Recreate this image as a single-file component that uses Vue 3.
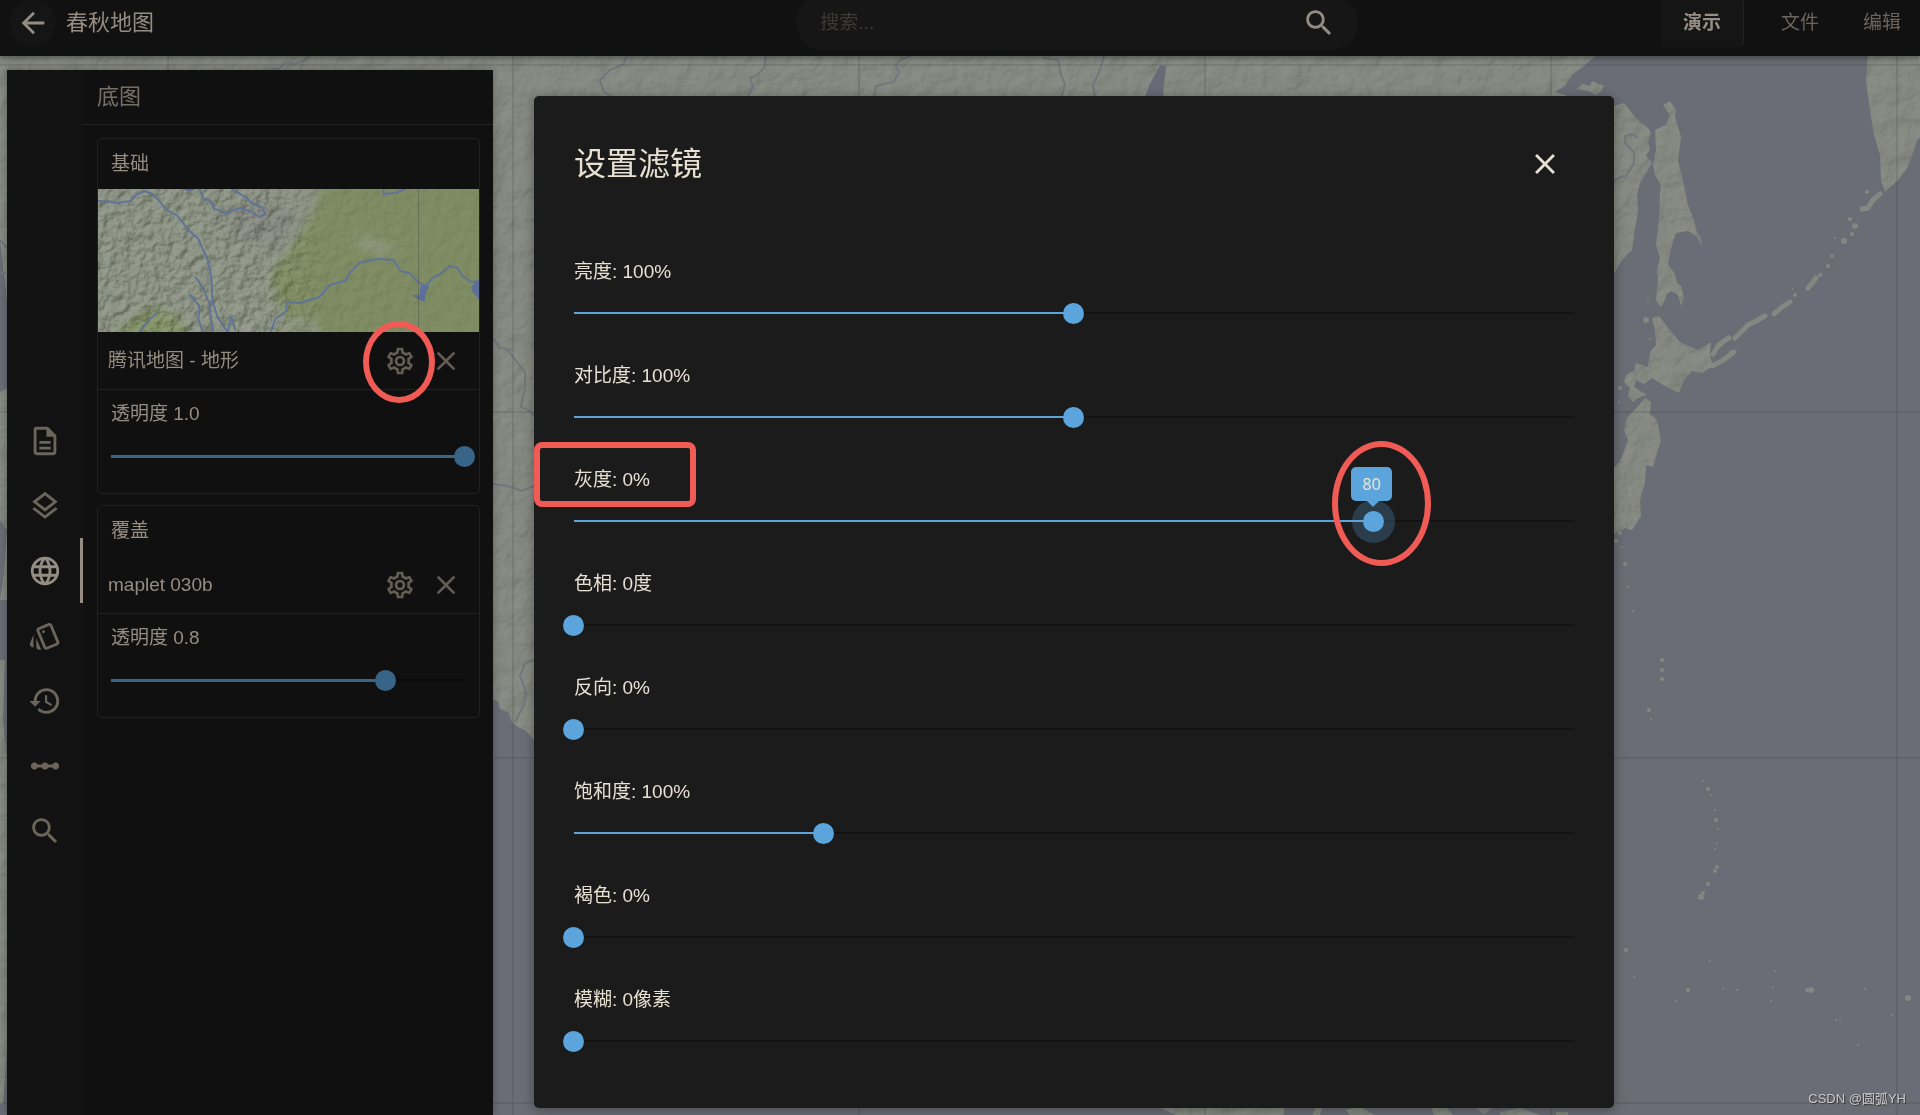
<template>
  <div class="page">
    <!-- 背景地图 -->
    <svg class="map" viewBox="0 0 1920 1115" preserveAspectRatio="xMidYMid slice" aria-hidden="true">
      <defs>
        <filter id="relief" x="0" y="0" width="100%" height="100%" color-interpolation-filters="sRGB">
          <feTurbulence type="fractalNoise" baseFrequency="0.05" numOctaves="4" seed="8" result="noise" />
          <feDiffuseLighting in="noise" surfaceScale="3" lighting-color="#9c9c9c">
            <feDistantLight azimuth="225" elevation="55" />
          </feDiffuseLighting>
        </filter>
        <clipPath id="landClip">
          <path v-for="(d, i) in lands" :key="i" :d="d" />
        </clipPath>
      </defs>
      <rect width="1920" height="1115" fill="#6a6d75" />
      <g fill="#868981">
        <path v-for="(d, i) in lands" :key="i" :d="d" />
      </g>
      <g class="chains">
        <path v-for="(d, i) in chains" :key="i" :d="d" />
      </g>
      <g clip-path="url(#landClip)" class="relief">
        <rect width="1920" height="1115" filter="url(#relief)" />
      </g>
      <circle v-for="(p, i) in islets" :key="i" :cx="p[0]" :cy="p[1]" :r="p[2]" fill="#848880" />
      <path d="M1160 65L1166 66L1163 96H1145L1150 84Z" fill="#686b76" />
      <g class="rivers">
        <path v-for="(d, i) in rivers" :key="i" :d="d" />
      </g>
      <path
        class="grid"
        d="M168 0V1115M513 0V1115M859 0V1115M1205 0V1115M1551 0V1115M1897 0V1115M0 65H1920M0 412H1920M0 758H1920M0 1103H1920"
      />
    </svg>

    <!-- 顶栏 -->
    <header class="topbar">
      <div class="brand">
        <button type="button" class="back" aria-label="返回">
          <svg class="icon-lg" viewBox="0 0 24 24"><path :d="icons.back" /></svg>
        </button>
        <span class="brand-name">春秋地图</span>
      </div>
      <form class="search" @submit.prevent>
        <input v-model="keyword" type="text" placeholder="搜索..." aria-label="搜索" />
        <button type="submit" aria-label="搜索">
          <svg class="icon-lg" viewBox="0 0 24 24"><path :d="icons.search" /></svg>
        </button>
      </form>
      <nav class="menu">
        <button
          v-for="item in menus"
          :key="item"
          type="button"
          :class="{ active: item === activeMenu }"
          @click="activeMenu = item"
        >
          {{ item }}
        </button>
      </nav>
    </header>

    <div class="workspace">
      <!-- 侧栏 -->
      <aside class="sidebar">
        <nav class="rail">
          <button
            v-for="tab in tabs"
            :key="tab.name"
            type="button"
            :aria-label="tab.label"
            :class="{ active: tab.name === activeTab }"
            @click="activeTab = tab.name"
          >
            <svg class="icon-lg" viewBox="0 0 24 24"><path :d="icons[tab.name]" /></svg>
          </button>
        </nav>
        <div class="panel">
          <h2>底图</h2>
          <div class="cards">
            <section v-for="layer in layers" :key="layer.id" class="card">
              <h3>{{ layer.group }}</h3>
              <svg
                v-if="layer.preview"
                class="preview"
                viewBox="0 0 382 143"
                preserveAspectRatio="xMidYMid slice"
                aria-hidden="true"
              >
                <defs>
                  <filter id="previewRelief" x="0" y="0" width="100%" height="100%" color-interpolation-filters="sRGB">
                    <feTurbulence type="fractalNoise" baseFrequency="0.1" numOctaves="4" seed="3" />
                    <feDiffuseLighting surfaceScale="4" lighting-color="#a6a6a6">
                      <feDistantLight azimuth="225" elevation="50" />
                    </feDiffuseLighting>
                  </filter>
                  <filter id="soft"><feGaussianBlur stdDeviation="4" /></filter>
                  <linearGradient id="ruggedFade">
                    <stop offset="0" stop-color="#ccc" />
                    <stop offset="0.45" stop-color="#ccc" />
                    <stop offset="0.6" stop-color="#333" />
                    <stop offset="1" stop-color="#222" />
                  </linearGradient>
                  <mask id="rugged"><rect width="382" height="143" fill="url(#ruggedFade)" /></mask>
                </defs>
                <rect width="382" height="143" fill="#8c9384" />
                <g filter="url(#soft)">
                  <path d="M225 -10L215 25L196 55L172 88L180 112L196 150H400V-10Z" fill="#7f8c64" />
                  <path d="M10 150L35 128L62 118L85 132L95 150Z" fill="#829068" />
                  <path d="M110 15L180 10L200 35L180 60L140 50Z" fill="#868a80" />
                  <path d="M255 48L275 50L300 60L285 66L262 58Z" fill="#8e967d" />
                  <path d="M185 128L215 130L230 150H180Z" fill="#8b937d" />
                </g>
                <g mask="url(#rugged)" class="relief strong">
                  <rect width="382" height="143" filter="url(#previewRelief)" />
                </g>
                <g class="preview-rivers">
                  <path d="M0 12L14 13L20 14L33 12L40 5L47 2L55 5L61 11L68 20L80 27L92 42L101 50L105 60L109 67L112 78L114 92L115 112L120 128L130 143" />
                  <path d="M102 0L106 10L113 12L117 20L130 24L142 19L152 22L162 28L168 25L164 18L154 14L148 8L134 0" />
                  <path d="M98 88L106 100L112 115L113 128L116 143M92 105L102 117L101 130L105 143M42 143L52 130L60 124M130 143L134 128L138 141" />
                  <path d="M173 143L178 130L189 122L189 113L203 114L215 110L222 108L232 96L248 92L252 84L262 74L280 70L296 71L303 82L312 84L322 94L329 97L335 89L343 85L352 77L360 79L365 87L374 93L382 92" />
                  <path d="M286 0V5L298 4L308 0" />
                </g>
                <path d="M314 106L322 106L323 97L332 97L328 105L327 113L320 110ZM374 98L378 92H382V111L375 103ZM85 0H98L92 3Z" fill="#5b6f99" />
                <path d="M321 0V143" class="grid" />
              </svg>
              <div class="layer-row">
                <span class="layer-name">{{ layer.name }}</span>
                <button type="button" aria-label="设置" class="tool">
                  <svg class="icon" viewBox="0 0 24 24"><path :d="icons.settings" /></svg>
                  <span v-if="layer.marked" class="mark mark-gear"></span>
                </button>
                <button type="button" aria-label="移除" class="tool">
                  <svg class="icon" viewBox="0 0 24 24"><path :d="icons.close" /></svg>
                </button>
              </div>
              <div class="opacity">
                <label :for="layer.id">透明度 {{ layer.opacity.toFixed(1) }}</label>
                <div class="slider thick">
                  <input
                    :id="layer.id"
                    v-model.number="layer.opacity"
                    type="range"
                    min="0.1"
                    max="1"
                    step="0.1"
                    :style="{ '--ratio': (layer.opacity - 0.1) / 0.9 }"
                  />
                </div>
              </div>
            </section>
          </div>
        </div>
      </aside>

      <!-- 滤镜对话框 -->
      <section class="dialog" role="dialog" aria-labelledby="dialog-title">
        <div class="dialog-head">
          <h1 id="dialog-title">设置滤镜</h1>
          <button type="button" aria-label="关闭">
            <svg class="icon-lg" viewBox="0 0 24 24"><path :d="icons.close" /></svg>
          </button>
        </div>
        <div class="filters">
          <div v-for="f in filters" :key="f.id" class="filter">
            <label :for="f.id">
              {{ f.label }}: {{ f.text }}
              <span v-if="f.dragging" class="mark mark-label"></span>
            </label>
            <div class="slider">
              <input
                :id="f.id"
                v-model.number="f.value"
                type="range"
                min="0"
                :max="f.max"
                :class="{ dragging: f.dragging }"
                :style="{ '--ratio': f.value / f.max }"
              />
              <div v-if="f.dragging" class="pin" :style="{ left: `${(f.value / f.max) * 100}%` }">
                <span class="bubble">{{ f.value }}</span>
                <span class="mark mark-pin"></span>
              </div>
            </div>
          </div>
        </div>
      </section>
    </div>

    <span class="watermark">CSDN @圆弧YH</span>
  </div>
</template>

<script setup>
import { ref, reactive } from 'vue'

const keyword = ref('')
const menus = ['演示', '文件', '编辑']
const activeMenu = ref('演示')
const activeTab = ref('globe')

const tabs = [
  { name: 'doc', label: '文档' },
  { name: 'layers', label: '图层' },
  { name: 'globe', label: '底图' },
  { name: 'style', label: '样式' },
  { name: 'history', label: '历史' },
  { name: 'scale', label: '时间轴' },
  { name: 'search', label: '搜索' },
]

const layers = reactive([
  { id: 'base', group: '基础', name: '腾讯地图 - 地形', opacity: 1, preview: true, marked: true },
  { id: 'overlay', group: '覆盖', name: 'maplet 030b', opacity: 0.8 },
])

const filters = reactive([
  { id: 'brightness', label: '亮度', text: '100%', value: 100, max: 200 },
  { id: 'contrast', label: '对比度', text: '100%', value: 100, max: 200 },
  { id: 'grayscale', label: '灰度', text: '0%', value: 80, max: 100, dragging: true },
  { id: 'hue', label: '色相', text: '0度', value: 0, max: 360 },
  { id: 'invert', label: '反向', text: '0%', value: 0, max: 100 },
  { id: 'saturate', label: '饱和度', text: '100%', value: 100, max: 400 },
  { id: 'sepia', label: '褐色', text: '0%', value: 0, max: 100 },
  { id: 'blur', label: '模糊', text: '0像素', value: 0, max: 20 },
])

// 陆地轮廓
const lands = [
  'M0 0H1640L1595 56L1584 66L1572 75L1565 86L1555 92L1562 94L1580 100L1614 106L1624 103L1632 113L1638 120L1648 128L1651 133L1648 142L1650 150L1646 155L1652 163L1646 173L1640 183L1637 195L1638 212L1634 235L1632 250L1622 260L1616 270L1610 280L1500 420L1300 700L900 800L560 752L534 740L526 731L518 727L512 722L508 712L500 709L498 701L493 700L300 640L7 640V600L0 600L4 570L7 530L0 520V392L7 388V300L0 240Z',
  'M1577 89L1582 84L1590 86L1592 81L1604 86L1601 91L1596 95L1588 91Z',
  'M1663 105L1670 101L1676 110L1675 117L1681 137L1678 160L1684 185L1688 205L1694 220L1696 230L1701 238L1702 246L1696 236L1688 231L1676 233L1671 248L1668 264L1675 274L1677 283L1681 286L1684 297L1681 306L1678 295L1671 291L1667 294L1663 304L1660 307L1656 300L1658 280L1657 270L1660 258L1656 245L1659 220L1660 192L1661 186L1655 175L1653 165L1656 150L1655 130L1666 125L1670 115Z',
  'M1652 318L1659 316L1668 328L1680 342L1698 350L1711 342L1710 352L1711 360L1714 365L1702 373L1692 371L1684 380L1679 393L1665 386L1652 378L1644 384L1636 380L1634 387L1647 395L1638 398L1633 402L1628 396L1630 388L1624 382L1626 375L1634 371L1636 363L1648 367L1650 352L1656 345L1655 330Z',
  'M1640 404L1645 398L1651 402L1650 414L1657 420L1661 440L1657 453L1653 467L1646 465L1645 483L1640 500L1641 516L1632 530L1625 528L1600 540V480L1620 462L1628 440L1624 430L1627 418Z',
  'M1868 50L1866 82L1870 110L1874 135L1880 155L1881 180L1885 192L1898 180L1907 168L1914 150L1917 140L1926 132V50Z',
  'M1155 1106H1284V1115H1176L1165 1110ZM1316 1104H1323L1320 1115H1313ZM1346 1110L1360 1106L1374 1115H1350ZM1430 1104H1444L1453 1115H1434ZM1472 1106H1494L1484 1114ZM1500 1112L1520 1108L1540 1115H1500ZM1556 1112H1568V1115H1556ZM0 660H5L3 720L7 760V1050L3 1104H0Z',
]

// 岛链
const chains = [
  'M1713 354L1718 346L1724 341L1729 338',
  'M1712 366L1722 361L1734 352',
  'M1735 338L1748 325L1756 321L1765 316',
  'M1774 314L1782 307L1790 302',
  'M1808 288L1813 282L1816 278',
  'M1862 209L1868 208L1873 200L1880 194',
]

// x, y, 半径
const islets = [
  [1867, 192, 2], [1850, 219, 2], [1855, 226, 3], [1852, 234, 2], [1844, 241, 3], [1835, 238, 1], [1832, 256, 2],
  [1828, 266, 2], [1820, 275, 2], [1795, 295, 2], [1793, 289, 1], [1732, 353, 3], [1646, 320, 3], [1648, 301, 1],
  [1650, 339, 1], [1620, 388, 2], [1619, 402, 1], [1620, 533, 2], [1616, 541, 2], [1622, 547, 1],
  [1625, 564, 2], [1628, 587, 1], [1633, 611, 1], [1662, 660, 2], [1662, 670, 2], [1662, 679, 2], [1649, 710, 2],
  [1651, 719, 1], [1703, 781, 1], [1708, 789, 2], [1711, 795, 1], [1715, 810, 1], [1716, 820, 2], [1718, 829, 1],
  [1717, 843, 1], [1715, 849, 1], [1717, 867, 2], [1715, 871, 2], [1708, 884, 2], [1703, 893, 2], [1701, 897, 3],
  [1626, 950, 2], [1634, 977, 1], [1688, 990, 2], [1676, 1001, 1], [1710, 961, 1], [1723, 989, 1], [1737, 990, 1],
  [1775, 971, 1], [1773, 987, 1], [1771, 1001, 1], [1807, 990, 2], [1811, 990, 3], [1865, 989, 1], [1908, 998, 3],
  [1892, 1015, 1], [1836, 1020, 1], [1840, 1019, 1], [1858, 1045, 1],
]

const rivers = [
  'M310 56L305 60L295 64L286 62L280 68L270 70',
  'M626 56L624 64L610 70L600 80L604 92L611 96',
  'M766 56L764 68L757 75L750 78L753 88L748 96',
  'M910 56L900 60L896 66L899 72L894 82L876 86L874 96',
  'M1042 58L1058 60L1061 75L1065 84L1062 96',
  'M1104 56L1100 70L1093 85L1095 96',
  'M493 338L500 348L507 349L513 357L520 366L525 372L525 388L521 407L530 411L534 416',
  'M493 484L502 485L514 488L521 491L534 486',
  'M534 660L525 663L520 676L526 692L524 705L515 722',
  'M1614 181L1620 177L1626 176L1634 163L1634 152L1625 143L1625 136L1632 134L1638 138',
  'M0 240L7 248M0 273H6',
]

const icons = {
  back: 'M20 11H7.83l5.59-5.59L12 4l-8 8 8 8 1.41-1.41L7.83 13H20v-2z',
  close: 'M19 6.41L17.59 5 12 10.59 6.41 5 5 6.41 10.59 12 5 17.59 6.41 19 12 13.41 17.59 19 19 17.59 13.41 12z',
  doc: 'M8 16h8v2H8zm0-4h8v2H8zm6-10H6c-1.1 0-2 .9-2 2v16c0 1.1.89 2 1.99 2H18c1.1 0 2-.9 2-2V8l-6-6zm4 18H6V4h7v5h5v11z',
  layers: 'M11.99 18.54l-7.37-5.73L3 14.07l9 7 9-7-1.63-1.27-7.38 5.74zM12 16l7.36-5.73L21 9l-9-7-9 7 1.63 1.27L12 16zm0-11.47L17.74 9 12 13.47 6.26 9 12 4.53z',
  globe: 'M11.99 2C6.47 2 2 6.48 2 12s4.47 10 9.99 10C17.52 22 22 17.52 22 12S17.52 2 11.99 2zm6.93 6h-2.95c-.32-1.25-.78-2.45-1.38-3.56 1.84.63 3.37 1.91 4.33 3.56zM12 4.04c.83 1.2 1.48 2.53 1.91 3.96h-3.82c.43-1.43 1.08-2.76 1.91-3.96zM4.26 14C4.1 13.36 4 12.69 4 12s.1-1.36.26-2h3.38c-.08.66-.14 1.32-.14 2s.06 1.34.14 2H4.26zm.82 2h2.95c.32 1.25.78 2.45 1.38 3.56-1.84-.63-3.37-1.9-4.33-3.56zm2.95-8H5.08c.96-1.66 2.49-2.93 4.33-3.56C8.81 5.55 8.35 6.75 8.03 8zM12 19.96c-.83-1.2-1.48-2.53-1.91-3.96h3.82c-.43 1.43-1.08 2.76-1.91 3.96zM14.34 14H9.66c-.09-.66-.16-1.32-.16-2s.07-1.35.16-2h4.68c.09.65.16 1.32.16 2s-.07 1.34-.16 2zm.25 5.56c.6-1.11 1.06-2.31 1.38-3.56h2.95c-.96 1.65-2.49 2.93-4.33 3.56zM16.36 14c.08-.66.14-1.32.14-2s-.06-1.34-.14-2h3.38c.16.64.26 1.31.26 2s-.1 1.36-.26 2h-3.38z',
  style: 'M2.53 19.65l1.34.56v-9.03l-2.43 5.86c-.41 1.02.08 2.19 1.09 2.61zm19.5-3.7L17.07 3.98c-.31-.75-1.04-1.21-1.81-1.23-.26 0-.53.04-.79.15L7.1 5.95c-.75.31-1.21 1.03-1.23 1.8-.01.27.04.54.15.8l4.96 11.97c.31.76 1.05 1.22 1.83 1.23.26 0 .52-.05.77-.15l7.36-3.05c1.02-.42 1.51-1.59 1.09-2.6zm-9.2 3.8L7.87 7.79l7.35-3.04h.01l4.95 11.95-7.35 3.05zM11 8a1 1 0 1 0 0 2 1 1 0 0 0 0-2zM5.88 19.75c0 1.1.9 2 2 2h1.45l-3.45-8.34v6.34z',
  history: 'M13.5 8H12v5l4.28 2.54.72-1.21-3.5-2.08V8zM13 3a9 9 0 0 0-9 9H1l3.96 4.03L9 12H6a7 7 0 1 1 7 7c-1.93 0-3.68-.79-4.94-2.06l-1.42 1.42A8.9 8.9 0 0 0 13 21a9 9 0 0 0 0-18z',
  scale: 'M19.5 9.5c-1.03 0-1.9.62-2.29 1.5h-2.92c-.39-.88-1.26-1.5-2.29-1.5s-1.9.62-2.29 1.5H6.79c-.39-.88-1.26-1.5-2.29-1.5C3.12 9.5 2 10.62 2 12s1.12 2.5 2.5 2.5c1.03 0 1.9-.62 2.29-1.5h2.92c.39.88 1.26 1.5 2.29 1.5s1.9-.62 2.29-1.5h2.92c.39.88 1.26 1.5 2.29 1.5 1.38 0 2.5-1.12 2.5-2.5s-1.12-2.5-2.5-2.5z',
  search: 'M15.5 14h-.79l-.28-.27C15.41 12.59 16 11.11 16 9.5 16 5.91 13.09 3 9.5 3S3 5.91 3 9.5 5.91 16 9.5 16c1.61 0 3.09-.59 4.23-1.57l.27.28v.79l5 4.99L20.49 19l-4.99-5zm-6 0C7.01 14 5 11.99 5 9.5S7.01 5 9.5 5 14 7.01 14 9.5 11.99 14 9.5 14z',
  settings: 'M19.43 12.98c.04-.32.07-.64.07-.98 0-.34-.03-.66-.07-.98l2.11-1.65c.19-.15.24-.42.12-.64l-2-3.46c-.09-.16-.26-.25-.44-.25-.06 0-.12.01-.17.03l-2.49 1c-.52-.4-1.08-.73-1.69-.98l-.38-2.65C14.46 2.18 14.25 2 14 2h-4c-.25 0-.46.18-.49.42l-.38 2.65c-.61.25-1.17.59-1.69.98l-2.49-1c-.06-.02-.12-.03-.18-.03-.17 0-.34.09-.43.25l-2 3.46c-.13.22-.07.49.12.64l2.11 1.65c-.04.32-.07.65-.07.98 0 .33.03.66.07.98l-2.11 1.65c-.19.15-.24.42-.12.64l2 3.46c.09.16.26.25.44.25.06 0 .12-.01.17-.03l2.49-1c.52.4 1.08.73 1.69.98l.38 2.65c.03.24.24.42.49.42h4c.25 0 .46-.18.49-.42l.38-2.65c.61-.25 1.17-.59 1.69-.98l2.49 1c.06.02.12.03.18.03.17 0 .34-.09.43-.25l2-3.46c.12-.22.07-.49-.12-.64l-2.11-1.65zm-1.98-1.71c.04.31.05.52.05.73 0 .21-.02.43-.05.73l-.14 1.13.89.7 1.08.84-.7 1.21-1.27-.51-1.04-.42-.9.68c-.43.32-.84.56-1.25.73l-1.06.43-.16 1.13-.2 1.35h-1.4l-.19-1.35-.16-1.13-1.06-.43c-.43-.18-.83-.41-1.23-.71l-.91-.7-1.06.43-1.27.51-.7-1.21 1.08-.84.89-.7-.14-1.13c-.03-.31-.05-.54-.05-.74s.02-.43.05-.73l.14-1.13-.89-.7-1.08-.84.7-1.21 1.27.51 1.04.42.9-.68c.43-.32.84-.56 1.25-.73l1.06-.43.16-1.13.2-1.35h1.39l.19 1.35.16 1.13 1.06.43c.43.18.83.41 1.23.71l.91.7 1.06-.43 1.27-.51.7 1.21-1.07.85-.89.7.14 1.13zM12 8c-2.21 0-4 1.79-4 4s1.79 4 4 4 4-1.79 4-4-1.79-4-4-4zm0 6c-1.1 0-2-.9-2-2s.9-2 2-2 2 .9 2 2-.9 2-2 2z',
}
</script>

<style>
body {
  margin: 0;
  background: #6a6d75;
}
</style>

<style scoped>
.page {
  position: relative;
  display: flex;
  flex-direction: column;
  min-height: 100vh;
  overflow: hidden;
  font-family: "Liberation Sans", "Noto Sans CJK SC", sans-serif;
  font-size: 19px;
  line-height: 28px;
  color: #958d82;
}

button {
  display: flex;
  align-items: center;
  justify-content: center;
  padding: 0;
  border: 0;
  background: none;
  color: inherit;
  font: inherit;
  cursor: pointer;
}

h1,
h2,
h3 {
  margin: 0;
  font-weight: 400;
}

svg {
  display: block;
  fill: currentColor;
}

.icon {
  width: 32px;
  height: 32px;
}

.icon-lg {
  width: 34px;
  height: 34px;
}

/* 地图 */
.map {
  position: absolute;
  inset: 0;
  width: 100%;
  height: 100%;
}

.relief {
  mix-blend-mode: soft-light;
  opacity: 0.5;
}

.relief.strong {
  opacity: 0.9;
}

.chains {
  fill: none;
  stroke: #848880;
  stroke-width: 5;
  stroke-linejoin: round;
  stroke-linecap: round;
}

.rivers {
  fill: none;
  stroke: #72767d;
  stroke-width: 2;
}

.grid {
  fill: none;
  stroke: #3c3f42;
  stroke-opacity: 0.35;
}

/* 顶栏 */
.topbar {
  position: relative;
  box-sizing: border-box;
  display: flex;
  align-items: center;
  height: 56px;
  padding-bottom: 10px;
  background: #111;
  box-shadow: 0 2px 6px rgba(0, 0, 0, 0.4);
}

.brand {
  box-sizing: border-box;
  display: flex;
  flex: 7 1 0;
  align-items: center;
  gap: 10px;
  padding-left: 10px;
}

.back {
  width: 46px;
  height: 46px;
  border-radius: 50%;
  background: #151515;
}

.brand-name {
  font-size: 22px;
}

.search {
  display: flex;
  flex: 0 1 562px;
  align-items: center;
  box-sizing: border-box;
  height: 54px;
  padding: 0 22px 0 24px;
  border-radius: 27px;
  background: #161616;
}

.search input {
  flex: 1;
  min-width: 0;
  padding: 0;
  border: 0;
  outline: 0;
  background: none;
  color: inherit;
  font: inherit;
}

.search input::placeholder {
  color: #3d3a36;
}

.menu {
  display: flex;
  flex: 5 1 0;
  justify-content: flex-end;
}

.menu button {
  height: 48px;
  padding: 0 22px;
  color: #6b655d;
}

.menu button:last-child {
  padding-right: 19px;
}

.menu .active {
  margin-right: 16px;
  border-radius: 4px;
  background: #151515;
  box-shadow: 1px 0 #222;
  color: #958d82;
  font-weight: 700;
}

/* 工作区 */
.workspace {
  position: relative;
  display: flex;
  flex: 1;
  align-items: flex-start;
  padding: 14px 7px 0;
}

.sidebar {
  display: flex;
  flex: 0 0 486px;
  align-self: stretch;
  background: #101010;
  box-shadow: 0 0 8px rgba(0, 0, 0, 0.3);
}

.rail {
  flex: 0 0 76px;
  padding-top: 338px;
  background: #121212;
}

.rail button {
  box-sizing: border-box;
  width: 76px;
  height: 65px;
  border-right: 3px solid transparent;
  padding-left: 3px;
  color: #6b655b;
}

.rail .active {
  border-color: #958d82;
  color: #958d82;
}

.panel {
  flex: 1;
}

.panel h2 {
  height: 54px;
  padding-left: 14px;
  border-bottom: 1px solid #222;
  color: #777067;
  font-size: 22px;
  line-height: 54px;
}

.cards {
  display: flex;
  flex-direction: column;
  gap: 11px;
  padding: 13px 13px 0 14px;
}

.card {
  border: 1px solid #222;
  border-radius: 5px;
}

.card h3 {
  padding: 0 13px;
  font-size: 19px;
  line-height: 50px;
}

.preview {
  width: 100%;
  height: 143px;
}

.preview-rivers {
  fill: none;
  stroke: #5f7496;
  stroke-width: 2;
  stroke-linejoin: round;
}

.layer-row {
  display: flex;
  align-items: center;
  height: 57px;
  padding: 0 10px;
  border-bottom: 1px solid #222;
}

.layer-name {
  flex: 1;
}

.tool {
  position: relative;
  width: 46px;
  height: 46px;
  color: #625c53;
}

.opacity {
  --accent: #376487;
  --rest: #0b0b0b;
  padding: 10px 14px 9px 13px;
}

.opacity label,
.filter label {
  display: block;
}

/* 滑块 */
.slider {
  position: relative;
  display: flex;
  height: 56px;
}

.slider input {
  --line: 2px;
  flex: 1;
  min-width: 0;
  height: 56px;
  margin: 0 -10px 0 -11px;
  appearance: none;
  outline: 0;
  background:
    linear-gradient(var(--accent), var(--accent)) 11px center / calc((100% - 21px) * var(--ratio)) var(--line) no-repeat,
    linear-gradient(var(--rest), var(--rest)) 11px center / calc(100% - 21px) var(--line) no-repeat;
}

.slider.thick input {
  --line: 3px;
}

.slider input::-webkit-slider-thumb {
  width: 21px;
  height: 21px;
  border-radius: 50%;
  appearance: none;
  background: var(--accent);
}

.slider .dragging::-webkit-slider-thumb {
  box-shadow: 0 0 0 11px rgba(91, 165, 220, 0.25);
}

.pin {
  position: absolute;
  top: 50%;
}

.bubble {
  position: absolute;
  bottom: 20px;
  left: -23px;
  width: 41px;
  height: 34px;
  border-radius: 5px;
  background: var(--accent);
  font-family: "Noto Sans", "Noto Sans CJK SC", sans-serif;
  font-size: 16px;
  line-height: 34px;
  text-align: center;
}

.bubble::after {
  content: "";
  position: absolute;
  top: 100%;
  left: 16px;
  border: 6px solid transparent;
  border-top-color: var(--accent);
  border-bottom: 0;
}

/* 对话框 */
.dialog {
  --accent: #5ba5dc;
  --rest: #131313;
  flex: 0 1 1080px;
  box-sizing: border-box;
  min-width: 0;
  margin: 26px 0 7px 41px;
  padding: 39px 40px;
  border-radius: 5px;
  background: #1b1b1b;
  box-shadow: 0 2px 12px rgba(0, 0, 0, 0.35);
  color: #e8e0d3;
}

.dialog-head {
  display: flex;
  align-items: center;
  justify-content: space-between;
  margin-bottom: 64px;
}

.dialog-head h1 {
  font-size: 32px;
  line-height: 60px;
}

.dialog-head button {
  width: 58px;
  height: 58px;
}

.dialog-head {
  height: 58px;
}

.filters {
  display: flex;
  flex-direction: column;
  gap: 20px;
}

.filter label {
  position: relative;
  height: 28px;
  line-height: 30px;
}

/* 红色标注 */
.mark {
  position: absolute;
  box-sizing: border-box;
  border: 6px solid #f15b55;
  border-radius: 50%;
  pointer-events: none;
}

.mark-gear {
  top: -17px;
  left: -14px;
  width: 72px;
  height: 82px;
}

.mark-label {
  top: -23px;
  left: -40px;
  width: 162px;
  height: 65px;
  border-radius: 8px;
}

.mark-pin {
  top: -80px;
  left: -42px;
  width: 99px;
  height: 125px;
}

.watermark {
  position: absolute;
  right: 14px;
  bottom: 6px;
  color: #c9c9c9;
  font-size: 13px;
  line-height: 20px;
  text-shadow: 1px 1px 1px #333;
}
</style>
